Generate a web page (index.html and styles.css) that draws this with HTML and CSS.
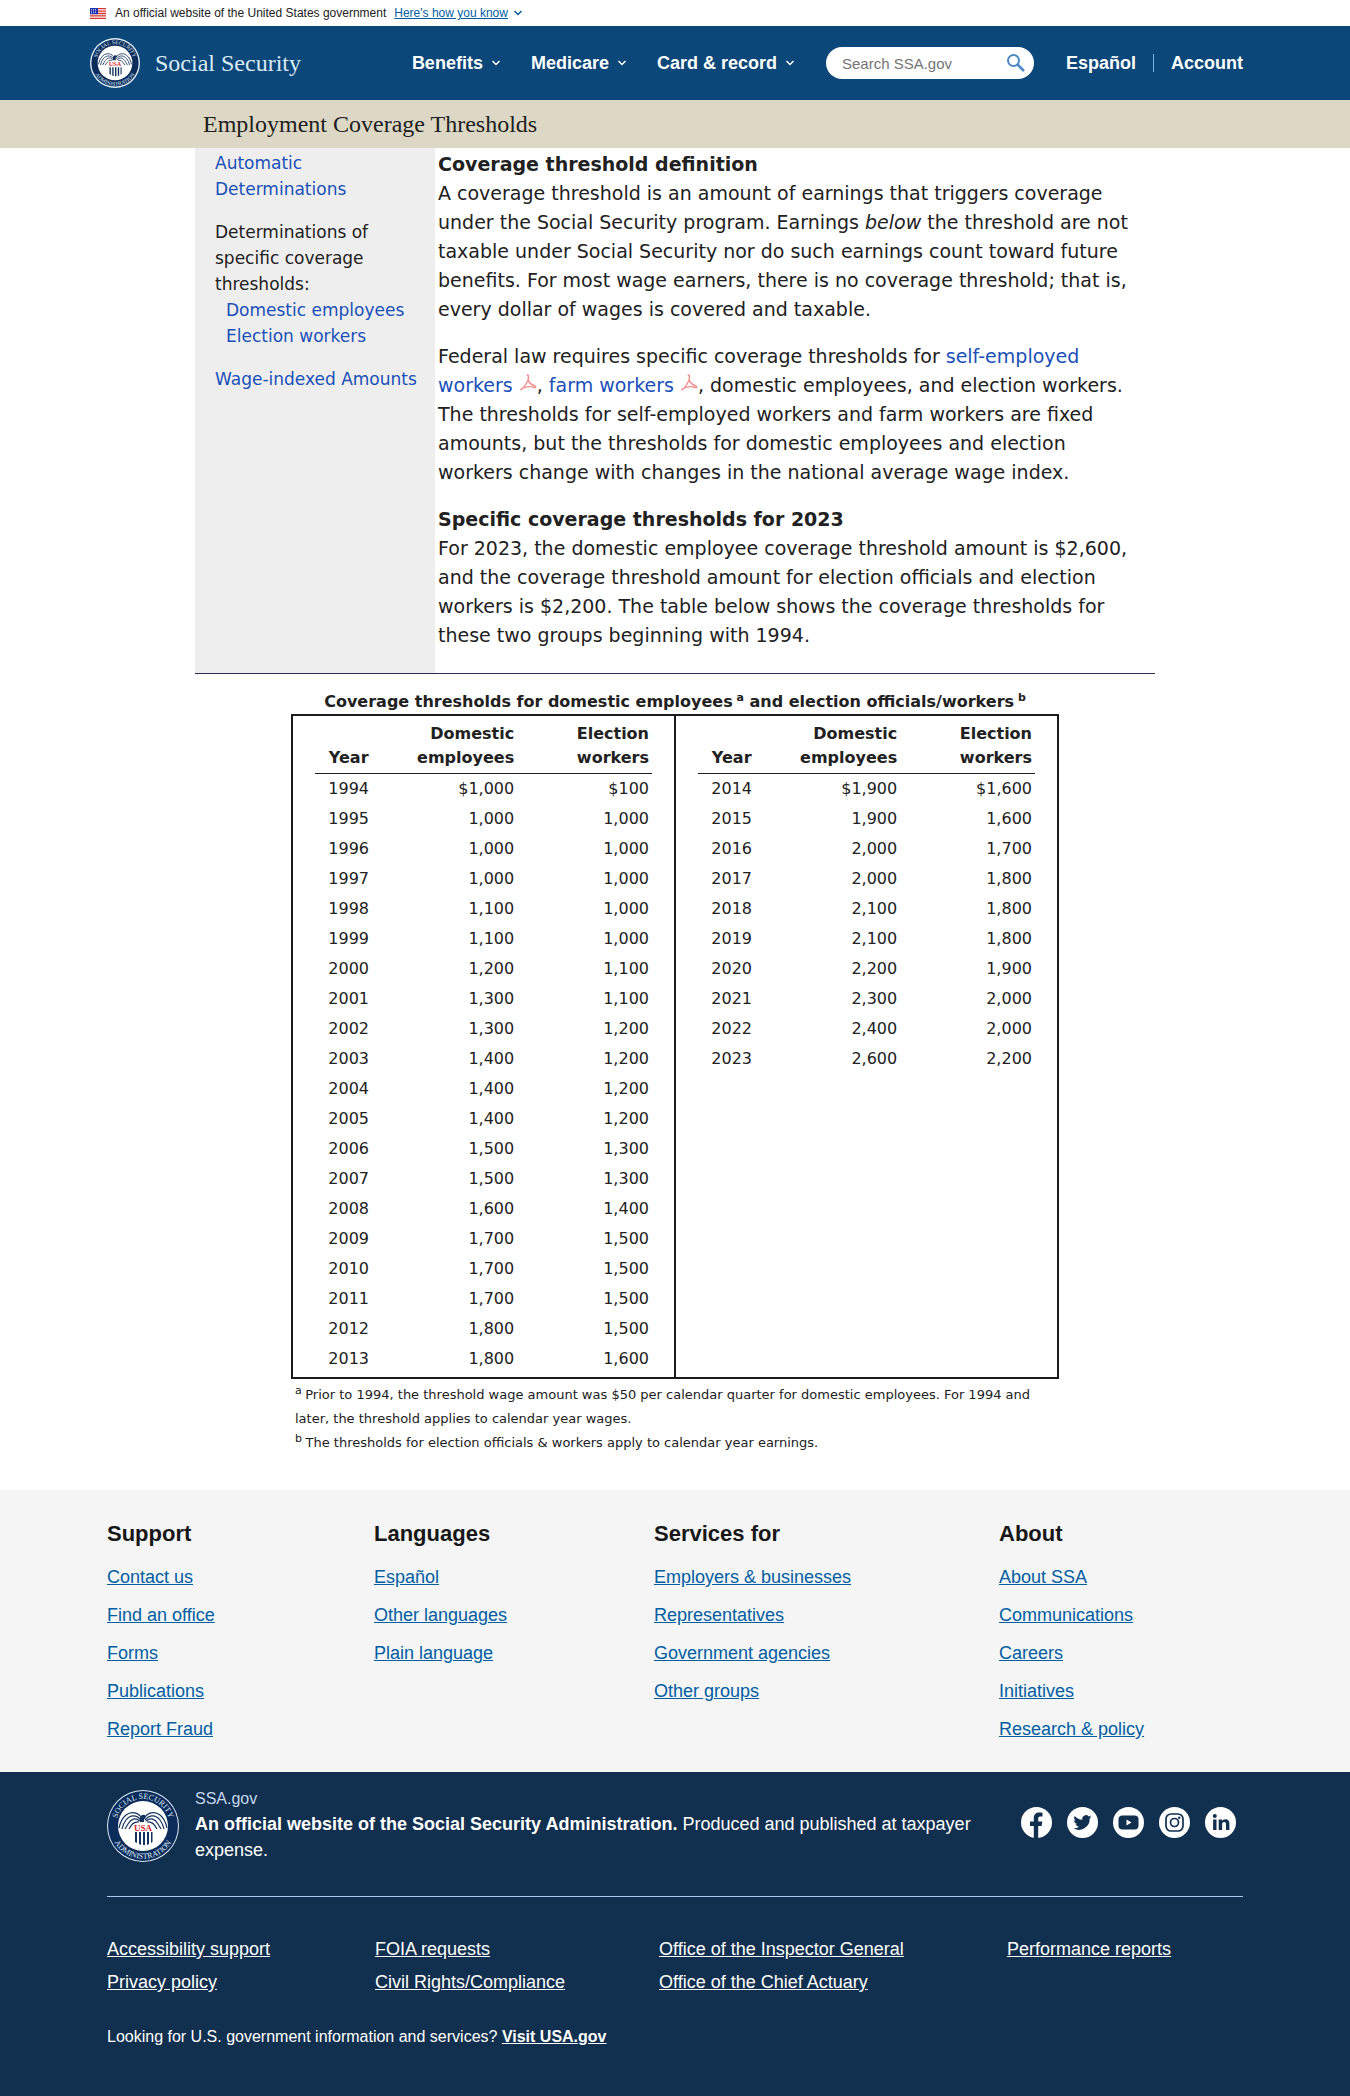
FILE: index.html
```html
<!DOCTYPE html>
<html lang="en">
<head>
<meta charset="utf-8">
<meta name="viewport" content="width=device-width, initial-scale=1">
<title>Employment Coverage Thresholds</title>
<link rel="stylesheet" href="styles.css">
</head>
<body>
<svg class="defs" aria-hidden="true">
  <path id="seal-top" d="M9.700 42A27 27 0 1 1 62.300 42" fill="none"/>
  <path id="seal-bottom" d="M3.600 42A33 33 0 0 0 68.400 42" fill="none"/>
  <symbol id="eagle" viewBox="0 0 72 72">
    <g fill="none" stroke="#14325c" stroke-width="1.200">
      <path d="M35 29C32 22 24 21 19 25Q14 29 12 38M34 30C29 24 23 25 19 30Q16 34 15 39M33 31C28 27 24 29 21 34L18 39M32 32Q26 31 22 39"/>
      <path d="M37 29C40 22 48 21 53 25Q58 29 60 38M38 30C43 24 49 25 53 30Q56 34 57 39M39 31C44 27 48 29 51 34L54 39M40 32Q46 31 50 39"/>
    </g>
    <path d="M33 28q1-4 5-3l1 2-2 1v4h-4z" fill="#14325c"/>
    <path d="M28 42h2v11l-2-1zM32 42h2v13l-2-1zM36 42h2v13h-2zM40 42h2v12l-2 1zM44 42h1.500v10l-1.500 1z" fill="#14325c"/>
  </symbol>
  <symbol id="chev" viewBox="0 0 10 8"><path d="M1.500 2l3.500 3.500L8.500 2" fill="none" stroke="currentColor" stroke-width="1.500"/></symbol>
  <symbol id="pdf" viewBox="0 0 18 18"><path d="M8 2Q9 0 9.500 2Q10 6 7 10Q4 15 1.500 16M9 5Q10 10 16 12Q18 14 15 13.500Q8 11 1.500 15.500" fill="none" stroke="#f0918f" stroke-width="1.400"/></symbol>
</svg>

<div class="banner">
  <svg class="flag" viewBox="0 0 16 11" aria-hidden="true"><path fill="#fff" d="M0 0h16v11H0z"/><path d="M0 .7h16M0 3.100h16M0 5.500h16M0 7.900h16M0 10.300h16" stroke="#d8342d" stroke-width="1.300"/><path fill="#1d33b1" d="M0 0h8v6.200H0z"/><path d="M1 1.500h6M1 3.100h6M1 4.700h6" stroke="#fff" stroke-width=".7" stroke-dasharray="1 1"/></svg>
  <span>An official website of the United States government</span>
  <button type="button" class="banner-btn"><span class="u">Here's how you know</span><svg class="chev" aria-hidden="true"><use href="#chev"/></svg></button>
</div>

<header class="header">
  <div class="header-in">
    <a href="#" class="brand"><svg class="seal-sm" viewBox="0 0 72 72" aria-hidden="true">
      <circle cx="36" cy="36" r="36" fill="#dcebf8"/><circle cx="36" cy="36" r="34" fill="#0c2c5c"/><circle cx="36" cy="36" r="25" fill="#fff"/>
      <text class="seal-text"><textPath href="#seal-top" startOffset="50%" text-anchor="middle">SOCIAL SECURITY</textPath></text>
      <text class="seal-text"><textPath href="#seal-bottom" startOffset="50%" text-anchor="middle">ADMINISTRATION</textPath></text>
      <use href="#eagle"/><text x="36" y="41" class="seal-usa" text-anchor="middle">USA</text></svg><span>Social Security</span></a>
    <nav class="nav" aria-label="Main">
      <button type="button">Benefits<svg class="chev" aria-hidden="true"><use href="#chev"/></svg></button>
      <button type="button">Medicare<svg class="chev" aria-hidden="true"><use href="#chev"/></svg></button>
      <button type="button">Card &amp; record<svg class="chev" aria-hidden="true"><use href="#chev"/></svg></button>
    </nav>
    <form class="search" role="search">
      <input type="search" placeholder="Search SSA.gov" aria-label="Search SSA.gov">
      <button type="submit" aria-label="Search"><svg viewBox="0 0 20 20" aria-hidden="true"><circle cx="7.500" cy="7.500" r="5.500" fill="none" stroke="#4b88c4" stroke-width="2"/><path d="M11.500 11.500l6.500 6.500" stroke="#4b88c4" stroke-width="2.500"/></svg></button>
    </form>
    <div class="user"><a href="#">Español</a><span class="bar"></span><a href="#">Account</a></div>
  </div>
</header>

<div class="titlebar"><h1>Employment Coverage Thresholds</h1></div>

<main class="main">
  <div class="cols">
    <aside class="side">
      <p><a href="#">Automatic Determinations</a></p>
      <div class="group">
        <p>Determinations of specific coverage thresholds:</p>
        <ul>
          <li><a href="#">Domestic employees</a></li>
          <li><a href="#">Election workers</a></li>
        </ul>
      </div>
      <p><a href="#">Wage-indexed Amounts</a></p>
    </aside>
    <article class="article">
      <h2>Coverage threshold definition</h2>
      <p>A coverage threshold is an amount of earnings that triggers coverage under the Social Security program. Earnings <em>below</em> the threshold are not taxable under Social Security nor do such earnings count toward future benefits. For most wage earners, there is no coverage threshold; that is, every dollar of wages is covered and taxable.</p>
      <p>Federal law requires specific coverage thresholds for <a href="#">self-employed workers <svg class="pdf" aria-hidden="true"><use href="#pdf"/></svg></a>, <a href="#">farm workers <svg class="pdf" aria-hidden="true"><use href="#pdf"/></svg></a>, domestic employees, and election workers. The thresholds for self-employed workers and farm workers are fixed amounts, but the thresholds for domestic employees and election workers change with changes in the national average wage index.</p>
      <h2>Specific coverage thresholds for 2023</h2>
      <p>For 2023, the domestic employee coverage threshold amount is $2,600, and the coverage threshold amount for election officials and election workers is $2,200. The table below shows the coverage thresholds for these two groups beginning with 1994.</p>
    </article>
  </div>

  <section class="data">
    <h3>Coverage thresholds for domestic employees<sup> a</sup> and election officials/workers<sup> b</sup></h3>
    <div class="box">
      <div class="half">
        <table>
          <thead><tr><th scope="col">Year</th><th scope="col">Domestic employees</th><th scope="col">Election workers</th></tr></thead>
          <tbody>
            <tr><td>1994</td><td>$1,000</td><td>$100</td></tr>
            <tr><td>1995</td><td>1,000</td><td>1,000</td></tr>
            <tr><td>1996</td><td>1,000</td><td>1,000</td></tr>
            <tr><td>1997</td><td>1,000</td><td>1,000</td></tr>
            <tr><td>1998</td><td>1,100</td><td>1,000</td></tr>
            <tr><td>1999</td><td>1,100</td><td>1,000</td></tr>
            <tr><td>2000</td><td>1,200</td><td>1,100</td></tr>
            <tr><td>2001</td><td>1,300</td><td>1,100</td></tr>
            <tr><td>2002</td><td>1,300</td><td>1,200</td></tr>
            <tr><td>2003</td><td>1,400</td><td>1,200</td></tr>
            <tr><td>2004</td><td>1,400</td><td>1,200</td></tr>
            <tr><td>2005</td><td>1,400</td><td>1,200</td></tr>
            <tr><td>2006</td><td>1,500</td><td>1,300</td></tr>
            <tr><td>2007</td><td>1,500</td><td>1,300</td></tr>
            <tr><td>2008</td><td>1,600</td><td>1,400</td></tr>
            <tr><td>2009</td><td>1,700</td><td>1,500</td></tr>
            <tr><td>2010</td><td>1,700</td><td>1,500</td></tr>
            <tr><td>2011</td><td>1,700</td><td>1,500</td></tr>
            <tr><td>2012</td><td>1,800</td><td>1,500</td></tr>
            <tr><td>2013</td><td>1,800</td><td>1,600</td></tr>
          </tbody>
        </table>
      </div>
      <div class="half">
        <table>
          <thead><tr><th scope="col">Year</th><th scope="col">Domestic employees</th><th scope="col">Election workers</th></tr></thead>
          <tbody>
            <tr><td>2014</td><td>$1,900</td><td>$1,600</td></tr>
            <tr><td>2015</td><td>1,900</td><td>1,600</td></tr>
            <tr><td>2016</td><td>2,000</td><td>1,700</td></tr>
            <tr><td>2017</td><td>2,000</td><td>1,800</td></tr>
            <tr><td>2018</td><td>2,100</td><td>1,800</td></tr>
            <tr><td>2019</td><td>2,100</td><td>1,800</td></tr>
            <tr><td>2020</td><td>2,200</td><td>1,900</td></tr>
            <tr><td>2021</td><td>2,300</td><td>2,000</td></tr>
            <tr><td>2022</td><td>2,400</td><td>2,000</td></tr>
            <tr><td>2023</td><td>2,600</td><td>2,200</td></tr>
          </tbody>
        </table>
      </div>
    </div>
    <div class="notes">
      <p><sup>a </sup>Prior to 1994, the threshold wage amount was $50 per calendar quarter for domestic employees. For 1994 and later, the threshold applies to calendar year wages.</p>
      <p><sup>b </sup>The thresholds for election officials &amp; workers apply to calendar year earnings.</p>
    </div>
  </section>
</main>

<footer>
  <div class="foot-top">
    <div class="wrap foot-grid">
      <section><h2>Support</h2><ul>
        <li><a href="#">Contact us</a></li><li><a href="#">Find an office</a></li><li><a href="#">Forms</a></li><li><a href="#">Publications</a></li><li><a href="#">Report Fraud</a></li></ul></section>
      <section><h2>Languages</h2><ul>
        <li><a href="#">Español</a></li><li><a href="#">Other languages</a></li><li><a href="#">Plain language</a></li></ul></section>
      <section><h2>Services for</h2><ul>
        <li><a href="#">Employers &amp; businesses</a></li><li><a href="#">Representatives</a></li><li><a href="#">Government agencies</a></li><li><a href="#">Other groups</a></li></ul></section>
      <section><h2>About</h2><ul>
        <li><a href="#">About SSA</a></li><li><a href="#">Communications</a></li><li><a href="#">Careers</a></li><li><a href="#">Initiatives</a></li><li><a href="#">Research &amp; policy</a></li></ul></section>
    </div>
  </div>
  <div class="foot-dark">
    <div class="wrap">
      <div class="ident">
        <svg class="seal-lg" viewBox="0 0 72 72" aria-hidden="true">
          <circle cx="36" cy="36" r="36" fill="#dcebf8"/><circle cx="36" cy="36" r="35" fill="#0c2c5c"/><circle cx="36" cy="36" r="25" fill="#fff"/>
          <text class="seal-text"><textPath href="#seal-top" startOffset="50%" text-anchor="middle">SOCIAL SECURITY</textPath></text>
          <text class="seal-text"><textPath href="#seal-bottom" startOffset="50%" text-anchor="middle">ADMINISTRATION</textPath></text>
          <use href="#eagle"/><text x="36" y="41" class="seal-usa" text-anchor="middle">USA</text></svg>
        <div class="ident-text">
          <p class="domain">SSA.gov</p>
          <p><strong>An official website of the Social Security Administration.</strong> Produced and published at taxpayer expense.</p>
        </div>
        <div class="social">
          <a href="#" aria-label="Facebook"><svg viewBox="0 0 31 31"><circle cx="15.500" cy="15.500" r="15.500" fill="#fff"/><path d="M12.800 31V19H9v-4.500h3.800V11c0-3.600 2.200-5.500 5.500-5.500 1.500 0 2.700.2 3.200.3v3.800h-2.100c-1.700 0-2.200.9-2.200 2.100v2.800h4.100L20.600 19h-3.400v12z" fill="#112f4e"/></svg></a>
          <a href="#" aria-label="Twitter"><svg viewBox="0 0 31 31"><circle cx="15.500" cy="15.500" r="15.500" fill="#fff"/><path transform="translate(6.500 6.500) scale(.75)" d="M24 4.600a10 10 0 0 1-2.800.8 5 5 0 0 0 2.100-2.700 10 10 0 0 1-3.100 1.200 4.900 4.900 0 0 0-8.400 4.500A14 14 0 0 1 1.700 3.200a4.900 4.900 0 0 0 1.500 6.500 5 5 0 0 1-2.200-.6 4.900 4.900 0 0 0 4 4.900 5 5 0 0 1-2.300.1 4.900 4.900 0 0 0 4.600 3.400A10 10 0 0 1 0 19.500a14 14 0 0 0 21.500-12.400A10 10 0 0 0 24 4.600z" fill="#112f4e"/></svg></a>
          <a href="#" aria-label="YouTube"><svg viewBox="0 0 31 31"><circle cx="15.500" cy="15.500" r="15.500" fill="#fff"/><rect x="5.500" y="8.500" width="20" height="14" rx="4" fill="#112f4e"/><path d="M13.500 12.500v6l5-3z" fill="#fff"/></svg></a>
          <a href="#" aria-label="Instagram"><svg viewBox="0 0 31 31"><circle cx="15.500" cy="15.500" r="15.500" fill="#fff"/><g fill="none" stroke="#112f4e" stroke-width="1.700"><rect x="7" y="7" width="17" height="17" rx="5"/><circle cx="15.500" cy="15.500" r="4"/></g><circle cx="20.200" cy="10.800" r="1.200" fill="#112f4e"/></svg></a>
          <a href="#" aria-label="LinkedIn"><svg viewBox="0 0 31 31"><circle cx="15.500" cy="15.500" r="15.500" fill="#fff"/><circle cx="9.800" cy="9" r="2" fill="#112f4e"/><path d="M8.100 12.500h3.400V23H8.100zM13.700 12.500H17v1.500c.6-1.100 1.800-1.800 3.400-1.800 3.300 0 4 2.200 4 5V23H21v-5.200c0-1.300-.1-2.800-1.800-2.800S17.100 16.400 17.100 17.800V23h-3.400z" fill="#112f4e"/></svg></a>
        </div>
      </div>
      <div class="legal">
        <ul><li><a href="#">Accessibility support</a></li><li><a href="#">Privacy policy</a></li></ul>
        <ul><li><a href="#">FOIA requests</a></li><li><a href="#">Civil Rights/Compliance</a></li></ul>
        <ul><li><a href="#">Office of the Inspector General</a></li><li><a href="#">Office of the Chief Actuary</a></li></ul>
        <ul><li><a href="#">Performance reports</a></li></ul>
      </div>
      <p class="usa">Looking for U.S. government information and services? <a href="#">Visit USA.gov</a></p>
    </div>
  </div>
</footer>
</body>
</html>
```

FILE: styles.css
```css
* { box-sizing: border-box; }
body { margin: 0; background: #fff; color: #212121; font-family: "Liberation Sans", Arial, sans-serif; }
h1, h2, h3, p, ul { margin: 0; padding: 0; }
ul { list-style: none; }
button { border: 0; padding: 0; background: none; font: inherit; color: inherit; cursor: pointer; }
sup { line-height: 0; }
.defs { position: absolute; width: 0; height: 0; }
.chev { width: 10px; height: 8px; }
.seal-text { font: 8px "Liberation Serif", serif; fill: #dcebf8; }
.seal-usa { font: bold 9px "Liberation Serif", serif; fill: #d8222a; stroke: #fff; stroke-width: 2px; paint-order: stroke; }

.banner { display: flex; align-items: center; height: 26px; padding: 0 90px; font-size: 12px; }
.flag { width: 16px; height: 11px; margin-right: 9px; }
.banner-btn { display: flex; align-items: center; gap: 5px; margin-left: 8px; color: #005ea2; }
.u { text-decoration: underline; }

.header { background: #0b4778; color: #fff; }
.header a { color: inherit; text-decoration: none; }
.header-in { display: flex; align-items: center; height: 74px; padding: 0 107px 0 90px; font-size: 18px; font-weight: bold; }
.brand { display: flex; align-items: center; gap: 15px; margin-right: auto; font: 24px "Liberation Serif", serif; }
.header .brand { color: #dcebf8; }
.seal-sm { width: 50px; height: 50px; }
.nav { display: flex; gap: 30px; margin-right: 31px; }
.nav button { display: flex; align-items: center; gap: 8px; }
.search { display: flex; align-items: center; width: 208px; height: 32px; margin-right: 32px; padding: 0 8px 0 16px; border-radius: 16px; background: #fff; }
.search input { flex: 1; min-width: 0; padding: 0; border: 0; background: none; font: 15px "Liberation Sans", Arial, sans-serif; appearance: none; }
.search input::placeholder { color: #757575; }
.search svg { display: block; width: 20px; height: 20px; }
.user { display: flex; align-items: center; gap: 17px; }
.bar { width: 1px; height: 18px; background: #73b3e7; }

.titlebar { background: #ddd8c5; }
.titlebar h1 { max-width: 960px; margin: 0 auto; padding: 0 8px; font: 24px/48px "Liberation Serif", serif; }

.main { max-width: 960px; margin: 0 auto; font-family: "DejaVu Sans", sans-serif; }
.main a { color: #1a50b8; text-decoration: none; }
.cols { display: grid; grid-template-columns: 1fr 3fr; border-bottom: 1px solid #2e2c52; }
.side { display: flex; flex-direction: column; gap: 17px; padding: 2px 8px 0 20px; background: #eee; font-size: 17px; line-height: 26px; }
.side ul { padding-left: 11px; }
.article { padding: 2px 16px 23px 3px; font-size: 19px; line-height: 29px; }
.article h2 { font-size: inherit; }
.article p + p, .article p + h2 { margin-top: 18px; }
.pdf { width: 18px; height: 18px; }

.data { width: 80%; margin: 0 auto; padding: 16px 0 31px; }
.data h3 { font-size: 16px; line-height: 24px; text-align: center; }
.data h3 sup { font-size: 11px; }
.box { display: flex; border: 2px solid #1b1b1b; }
.half { flex: 1; padding: 3px 22px; }
.half + .half { border-left: 2px solid #1b1b1b; }
table { width: 100%; border-collapse: collapse; table-layout: fixed; font-size: 16px; line-height: 24px; }
th, td { width: 40%; padding: 3px; text-align: right; vertical-align: bottom; }
th { padding-left: 32px; border-bottom: 1px solid #212121; }
th:first-child, td:first-child { width: 20%; padding-left: 3px; text-align: center; }
.notes { padding: 4px; font-size: 13px; line-height: 24px; }
.notes sup { font-size: 11px; }

.wrap { padding: 0 107px; }
.foot-top { padding: 30px 0 24px; background: #f5f5f5; }
.foot-grid { display: grid; grid-template-columns: 267fr 280fr 345fr 244fr; }
.foot-top h2 { margin-bottom: 10px; color: #171717; font-size: 22px; line-height: 28px; }
.foot-top li { font-size: 18px; line-height: 38px; }
.foot-top a { color: #005ea2; }
.foot-dark { padding: 18px 0 49px; background: #112f4e; color: #fff; }
.foot-dark a { color: inherit; }
.ident { display: flex; padding-bottom: 33px; border-bottom: 1px solid #a9c9f0; }
.seal-lg { flex: none; width: 72px; height: 72px; }
.ident-text { flex: 1; margin: -3px 40px 0 16px; font-size: 18px; line-height: 26px; }
.domain { color: #c5d8f0; font-size: 16px; line-height: 24px; }
.social { display: flex; align-items: center; gap: 15px; margin-right: 7px; height: 64px; }
.social svg { display: block; width: 31px; height: 31px; }
.legal { display: grid; grid-template-columns: 268fr 284fr 348fr 236fr; padding-top: 36px; font-size: 18px; line-height: 33px; }
.usa { margin-top: 26px; font-size: 16px; line-height: 24px; }
.usa a { font-weight: bold; }
```
